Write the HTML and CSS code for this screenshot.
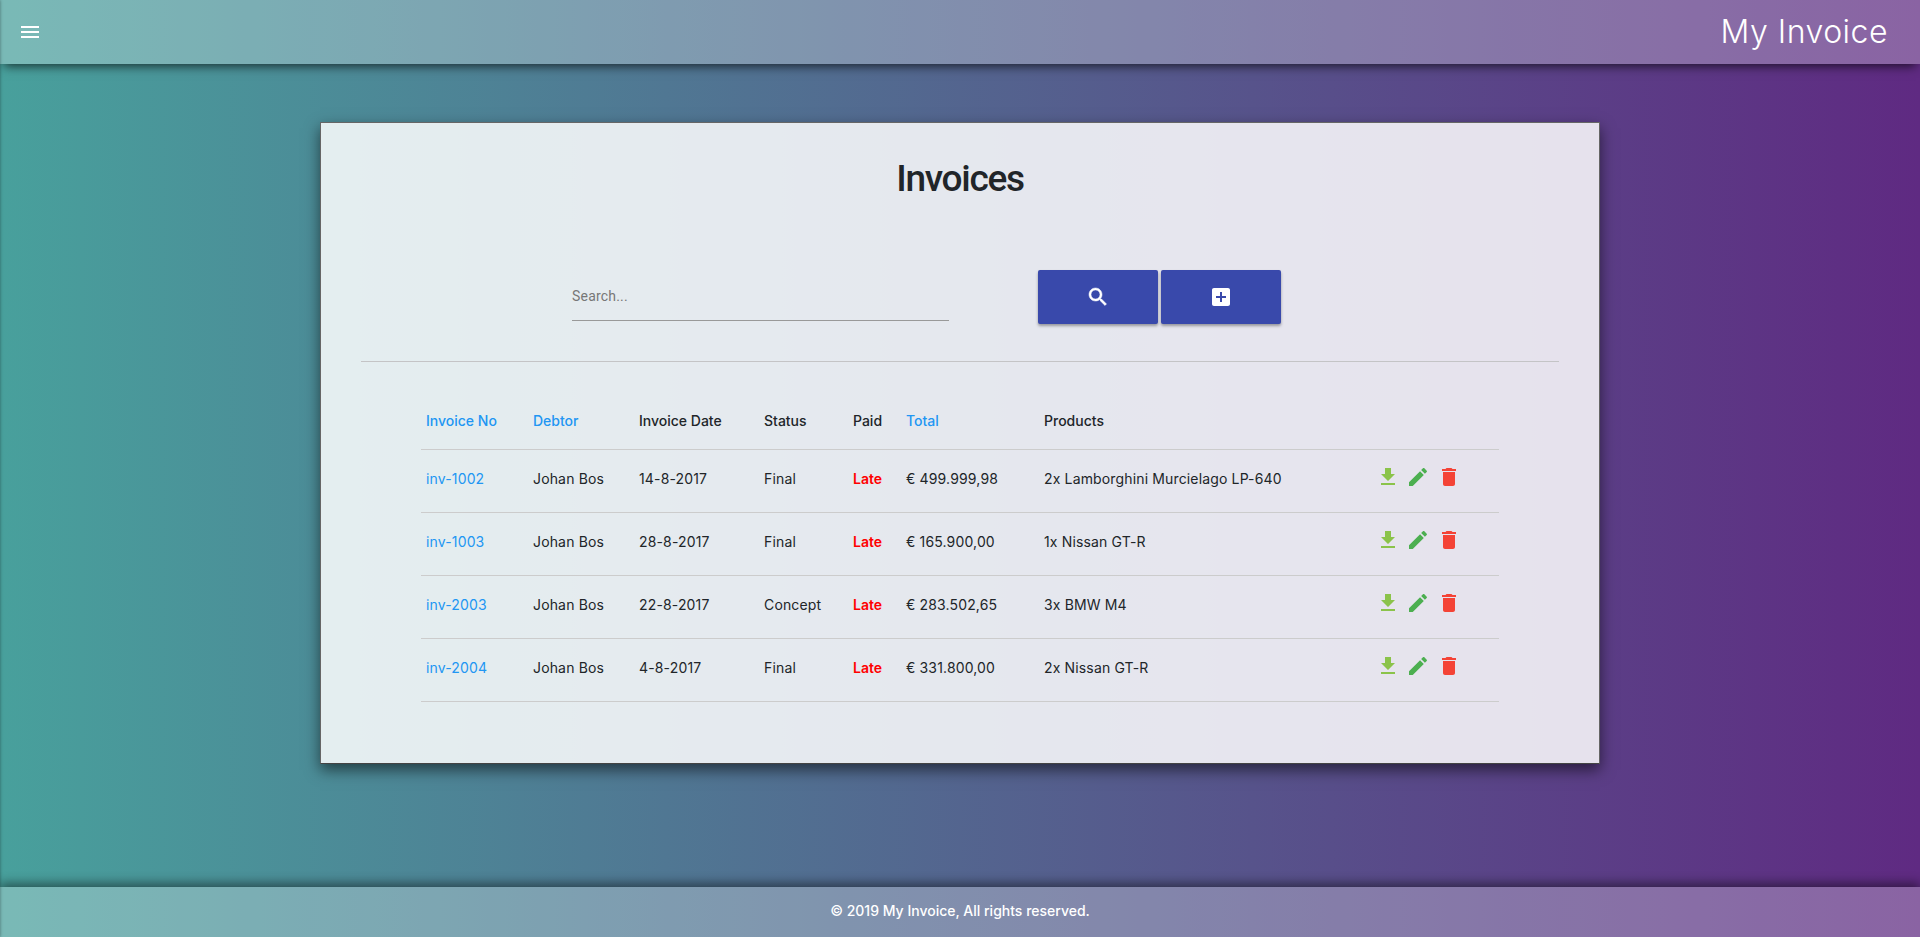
FILE: index.html
```html
<!DOCTYPE html>
<html lang="en">
<head>
  <meta charset="UTF-8" />
  <meta name="viewport" content="width=device-width, initial-scale=1.0" />
  <title>My Invoice</title>
  <link rel="stylesheet" href="styles.css">
</head>
<body>
  <aside class="drawer"></aside>

  <header class="topbar">
    <svg class="menu-icon" viewBox="0 0 24 24"><path d="M3 18h18v-2H3v2zm0-5h18v-2H3v2zm0-7v2h18V6H3z"/></svg>
    <span class="brand">My Invoice</span>
  </header>

  <main class="page">
    <section class="card">
      <h1>Invoices</h1>

      <div class="search-row">
        <div class="search-field">Search...</div>
        <div class="search-buttons">
          <button class="action-btn">
            <svg class="icon-search" viewBox="0 0 24 24"><path d="M15.5 14h-.79l-.28-.27C15.41 12.59 16 11.11 16 9.5 16 5.91 13.09 3 9.5 3S3 5.91 3 9.5 5.91 16 9.5 16c1.61 0 3.09-.59 4.23-1.57l.27.28v.79l5 4.99L20.49 19l-4.99-5zm-6 0C7.01 14 5 11.99 5 9.5S7.01 5 9.5 5 14 7.01 14 9.5 11.99 14 9.5 14z"/></svg>
          </button>
          <button class="action-btn">
            <svg viewBox="0 0 24 24"><path d="M19 3H5c-1.11 0-2 .9-2 2v14c0 1.1.89 2 2 2h14c1.1 0 2-.9 2-2V5c0-1.1-.9-2-2-2zm-2 10h-4v4h-2v-4H7v-2h4V7h2v4h4v2z"/></svg>
          </button>
        </div>
      </div>

      <hr class="divider">

      <table class="invoices">
        <thead>
          <tr>
            <th class="col-no sortable">Invoice No</th>
            <th class="col-debtor sortable">Debtor</th>
            <th class="col-date">Invoice Date</th>
            <th class="col-status">Status</th>
            <th class="col-paid">Paid</th>
            <th class="col-total sortable">Total</th>
            <th class="col-products">Products</th>
            <th class="col-actions"></th>
          </tr>
        </thead>
        <tbody>
          <tr>
            <td><a href="#">inv-1002</a></td>
            <td>Johan Bos</td>
            <td>14-8-2017</td>
            <td>Final</td>
            <td class="late">Late</td>
            <td>€ 499.999,98</td>
            <td>2x Lamborghini Murcielago LP-640</td>
            <td class="row-actions">
              <svg class="icon-download" viewBox="0 0 24 24"><path d="M19 9h-4V3H9v6H5l7 7 7-7zM5 18v2h14v-2H5z"/></svg>
              <svg class="icon-edit" viewBox="0 0 24 24"><path d="M3 17.25V21h3.75L17.81 9.94l-3.75-3.75L3 17.25zM20.71 7.04c.39-.39.39-1.02 0-1.41l-2.34-2.34c-.39-.39-1.02-.39-1.41 0l-1.83 1.83 3.75 3.75 1.83-1.83z"/></svg>
              <svg class="icon-delete" viewBox="0 0 24 24"><path d="M6 19c0 1.1.9 2 2 2h8c1.1 0 2-.9 2-2V7H6v12zM19 4h-3.5l-1-1h-5l-1 1H5v2h14V4z"/></svg>
            </td>
          </tr>
          <tr>
            <td><a href="#">inv-1003</a></td>
            <td>Johan Bos</td>
            <td>28-8-2017</td>
            <td>Final</td>
            <td class="late">Late</td>
            <td>€ 165.900,00</td>
            <td>1x Nissan GT-R</td>
            <td class="row-actions">
              <svg class="icon-download" viewBox="0 0 24 24"><path d="M19 9h-4V3H9v6H5l7 7 7-7zM5 18v2h14v-2H5z"/></svg>
              <svg class="icon-edit" viewBox="0 0 24 24"><path d="M3 17.25V21h3.75L17.81 9.94l-3.75-3.75L3 17.25zM20.71 7.04c.39-.39.39-1.02 0-1.41l-2.34-2.34c-.39-.39-1.02-.39-1.41 0l-1.83 1.83 3.75 3.75 1.83-1.83z"/></svg>
              <svg class="icon-delete" viewBox="0 0 24 24"><path d="M6 19c0 1.1.9 2 2 2h8c1.1 0 2-.9 2-2V7H6v12zM19 4h-3.5l-1-1h-5l-1 1H5v2h14V4z"/></svg>
            </td>
          </tr>
          <tr>
            <td><a href="#">inv-2003</a></td>
            <td>Johan Bos</td>
            <td>22-8-2017</td>
            <td>Concept</td>
            <td class="late">Late</td>
            <td>€ 283.502,65</td>
            <td>3x BMW M4</td>
            <td class="row-actions">
              <svg class="icon-download" viewBox="0 0 24 24"><path d="M19 9h-4V3H9v6H5l7 7 7-7zM5 18v2h14v-2H5z"/></svg>
              <svg class="icon-edit" viewBox="0 0 24 24"><path d="M3 17.25V21h3.75L17.81 9.94l-3.75-3.75L3 17.25zM20.71 7.04c.39-.39.39-1.02 0-1.41l-2.34-2.34c-.39-.39-1.02-.39-1.41 0l-1.83 1.83 3.75 3.75 1.83-1.83z"/></svg>
              <svg class="icon-delete" viewBox="0 0 24 24"><path d="M6 19c0 1.1.9 2 2 2h8c1.1 0 2-.9 2-2V7H6v12zM19 4h-3.5l-1-1h-5l-1 1H5v2h14V4z"/></svg>
            </td>
          </tr>
          <tr>
            <td><a href="#">inv-2004</a></td>
            <td>Johan Bos</td>
            <td>4-8-2017</td>
            <td>Final</td>
            <td class="late">Late</td>
            <td>€ 331.800,00</td>
            <td>2x Nissan GT-R</td>
            <td class="row-actions">
              <svg class="icon-download" viewBox="0 0 24 24"><path d="M19 9h-4V3H9v6H5l7 7 7-7zM5 18v2h14v-2H5z"/></svg>
              <svg class="icon-edit" viewBox="0 0 24 24"><path d="M3 17.25V21h3.75L17.81 9.94l-3.75-3.75L3 17.25zM20.71 7.04c.39-.39.39-1.02 0-1.41l-2.34-2.34c-.39-.39-1.02-.39-1.41 0l-1.83 1.83 3.75 3.75 1.83-1.83z"/></svg>
              <svg class="icon-delete" viewBox="0 0 24 24"><path d="M6 19c0 1.1.9 2 2 2h8c1.1 0 2-.9 2-2V7H6v12zM19 4h-3.5l-1-1h-5l-1 1H5v2h14V4z"/></svg>
            </td>
          </tr>
        </tbody>
      </table>
    </section>
  </main>

  <footer class="bottombar">© 2019 My Invoice, All rights reserved.</footer>
</body>
</html>
```

FILE: styles.css
```css
html, body {
  height: 100%;
}

body {
  margin: 0;
  display: flex;
  flex-direction: column;
  height: 937px;
  overflow: hidden;
  font-family: Inter, sans-serif;
  font-size: 14px;
  color: #212529;
  background: linear-gradient(90deg, #48a09c 0%, #5f2a82 100%);
}

/* closed side menu, only its shadow shows at the left edge */
.drawer {
  position: fixed;
  top: 0;
  left: -240px;
  width: 240px;
  height: 100%;
  box-shadow: 0 0 3px rgba(0, 0, 0, 0.4);
  z-index: 3;
}

.topbar {
  flex: 0 0 64px;
  display: flex;
  align-items: center;
  justify-content: space-between;
  padding: 0 32px 0 18px;
  background: rgba(255, 255, 255, 0.27);
  box-shadow: 0 6px 10px -4px rgba(0, 0, 0, 0.7);
  z-index: 2;
}

.menu-icon {
  width: 24px;
  height: 24px;
  fill: #fff;
}

.brand {
  font-family: Inter, sans-serif;
  font-size: 32px;
  font-weight: 300;
  letter-spacing: 0.5px;
  color: #fff;
  margin-bottom: 2px;
}

.page {
  flex: 1;
  display: flex;
  justify-content: center;
  align-items: flex-start;
  padding-top: 58px;
}

.card {
  box-sizing: border-box;
  width: 1280px;
  height: 642px;
  padding: 0 40px;
  background: rgba(255, 255, 255, 0.85);
  border: 1px solid #666;
  border-bottom-color: #444;
  box-shadow: 0 6px 14px rgba(0, 0, 0, 0.55);
}

.card h1 {
  margin: 36px 0 0;
  text-align: center;
  font-family: Roboto, sans-serif;
  font-size: 37px;
  line-height: 40px;
  font-weight: 500;
  letter-spacing: -1.3px;
}

.search-row {
  display: flex;
  justify-content: flex-start;
  margin-top: 71px;
  padding-left: 211px;
}

.search-field {
  box-sizing: border-box;
  width: 377px;
  height: 51px;
  padding-top: 18px;
  font-family: Roboto, sans-serif;
  font-size: 14px;
  letter-spacing: 0.2px;
  color: #777;
  border-bottom: 1px solid #999;
}

.search-buttons {
  display: flex;
  gap: 3px;
  margin-left: 89px;
}

.action-btn {
  width: 120px;
  height: 54px;
  display: flex;
  align-items: center;
  justify-content: center;
  padding: 0;
  border: 0;
  border-radius: 2px;
  background: #3949ab;
  box-shadow: 0 2px 3px rgba(0, 0, 0, 0.35);
}

.action-btn svg {
  width: 24px;
  height: 24px;
  fill: #fff;
}

.action-btn .icon-search {
  stroke: #fff;
  stroke-width: 0.5;
}

.divider {
  margin: 37px 0 0;
  border: 0;
  border-top: 1px solid #c4c4c6;
}

.invoices {
  width: 1078px;
  margin: 25px 0 0 60px;
  border-collapse: collapse;
  table-layout: fixed;
}

.invoices th {
  box-sizing: border-box;
  height: 62px;
  padding: 6px 5px 0;
  text-align: left;
  font-weight: 500;
  border-bottom: 1px solid #ccc;
}

.invoices td {
  box-sizing: border-box;
  height: 63px;
  padding: 0 5px 4px;
  letter-spacing: 0.15px;
  border-bottom: 1px solid #ccc;
}

.col-no { width: 107px; }
.col-debtor { width: 106px; }
.col-date { width: 125px; }
.col-status { width: 89px; }
.col-paid { width: 53px; }
.col-total { width: 138px; }
.col-products { width: 335px; }

.invoices th.sortable,
.invoices a {
  color: #2196f3;
  text-decoration: none;
}

.invoices .late {
  color: #f00;
  font-weight: 600;
  letter-spacing: 0;
}

.invoices .row-actions {
  padding-left: 2px;
  padding-bottom: 2px;
  font-size: 0;
  white-space: nowrap;
}

.row-actions svg {
  width: 24px;
  height: 24px;
  margin-right: 7px;
  position: relative;
  top: -3px;
}

.row-actions .icon-download {
  margin-right: 6px;
}

.icon-download { fill: #8bc34a; }
.icon-edit { fill: #4caf50; }
.icon-delete { fill: #f44336; }

.bottombar {
  flex: 0 0 50px;
  display: flex;
  align-items: center;
  justify-content: center;
  padding-bottom: 3px;
  box-sizing: border-box;
  color: #fff;
  font-weight: 500;
  background: rgba(255, 255, 255, 0.27);
  box-shadow: 0 -4px 10px rgba(0, 0, 0, 0.45);
  z-index: 2;
}
```
